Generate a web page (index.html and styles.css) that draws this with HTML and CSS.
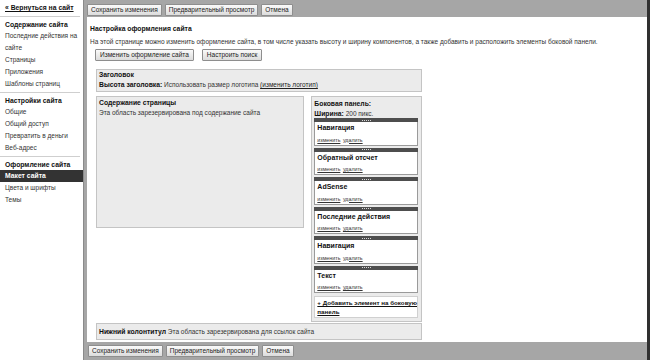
FILE: index.html
```html
<!DOCTYPE html>
<html lang="ru">
<head>
  <meta charset="UTF-8">
  <title>Макет сайта</title>
  <link rel="stylesheet" href="styles.css">
</head>
<body>
  <aside class="sidebar">
    <div class="back"><a href="#">« Вернуться на сайт</a></div>
    <div class="group">
      <div class="group-title">Содержание сайта</div>
      <a href="#">Последние действия на сайте</a>
      <a href="#">Страницы</a>
      <a href="#">Приложения</a>
      <a href="#">Шаблоны страниц</a>
    </div>
    <div class="group">
      <div class="group-title">Настройки сайта</div>
      <a href="#">Общие</a>
      <a href="#">Общий доступ</a>
      <a href="#">Превратить в деньги</a>
      <a href="#">Веб-адрес</a>
    </div>
    <div class="group last">
      <div class="group-title">Оформление сайта</div>
      <a href="#" class="active">Макет сайта</a>
      <a href="#">Цвета и шрифты</a>
      <a href="#">Темы</a>
    </div>
  </aside>

  <main class="main">
    <div class="toolbar">
      <button type="button">Сохранить изменения</button>
      <button type="button">Предварительный просмотр</button>
      <button type="button">Отмена</button>
    </div>

    <div class="content">
      <h1>Настройка оформления сайта</h1>
      <p class="intro">На этой странице можно изменить оформление сайта, в том числе указать высоту и ширину компонентов, а также добавить и расположить элементы боковой панели.</p>
      <div class="actions">
        <button type="button">Изменить оформление сайта</button>
        <button type="button">Настроить поиск</button>
      </div>

      <div class="layout">
        <div class="box header-box">
          <div><b>Заголовок</b></div>
          <div><b>Высота заголовка:</b> Использовать размер логотипа <a href="#">(изменить логотип)</a></div>
        </div>

        <div class="row">
          <div class="box page-box">
            <div><b>Содержание страницы</b></div>
            <div>Эта область зарезервирована под содержание сайта</div>
          </div>

          <div class="box side-box">
            <div class="side-title">Боковая панель:</div>
            <div class="side-width"><b>Ширина:</b> 200 пикс.</div>

            <div class="widget">
              <div class="grip"><span></span></div>
              <div class="widget-body">
                <div class="widget-title">Навигация</div>
                <div class="widget-links"><a href="#">изменить</a> <a href="#">удалить</a></div>
              </div>
            </div>
            <div class="widget">
              <div class="grip"><span></span></div>
              <div class="widget-body">
                <div class="widget-title">Обратный отсчет</div>
                <div class="widget-links"><a href="#">изменить</a> <a href="#">удалить</a></div>
              </div>
            </div>
            <div class="widget">
              <div class="grip"><span></span></div>
              <div class="widget-body">
                <div class="widget-title">AdSense</div>
                <div class="widget-links"><a href="#">изменить</a> <a href="#">удалить</a></div>
              </div>
            </div>
            <div class="widget">
              <div class="grip"><span></span></div>
              <div class="widget-body">
                <div class="widget-title">Последние действия</div>
                <div class="widget-links"><a href="#">изменить</a> <a href="#">удалить</a></div>
              </div>
            </div>
            <div class="widget">
              <div class="grip"><span></span></div>
              <div class="widget-body">
                <div class="widget-title">Навигация</div>
                <div class="widget-links"><a href="#">изменить</a> <a href="#">удалить</a></div>
              </div>
            </div>
            <div class="widget">
              <div class="grip"><span></span></div>
              <div class="widget-body">
                <div class="widget-title">Текст</div>
                <div class="widget-links"><a href="#">изменить</a> <a href="#">удалить</a></div>
              </div>
            </div>

            <div class="add-widget"><a href="#">+ Добавить элемент на боковую панель</a></div>
          </div>
        </div>

        <div class="box footer-box"><b>Нижний колонтитул</b> Эта область зарезервирована для ссылок сайта</div>
      </div>
    </div>

    <div class="toolbar bottom">
      <button type="button">Сохранить изменения</button>
      <button type="button">Предварительный просмотр</button>
      <button type="button">Отмена</button>
    </div>
  </main>
</body>
</html>
```

FILE: styles.css
```css
*{
  box-sizing: border-box;
}
body{
  margin: 0;
  width: 650px;
  height: 360px;
  overflow: hidden;
  display: flex;
  font-family: "Liberation Sans", Arial, sans-serif;
  font-size: 6.5px;
  color: #333;
  background: #fff;
}
a{
  color: #222;
}
b{
  font-size: 6.8px;
  color: #111;
}

/* left menu */
.sidebar{
  width: 84px;
  flex: none;
  border-right: 1px solid #8a8a8a;
}
.back{
  height: 17px;
  line-height: 16px;
  padding-left: 5px;
  margin-right: 3px;
  border-bottom: 1px solid #cfcfcf;
}
.back a{
  font-weight: bold;
  font-size: 6.8px;
  color: #111;
}
.group{
  display: flex;
  flex-direction: column;
  padding: 3px 0 2px;
  margin-right: 3px;
  border-bottom: 1px solid #cfcfcf;
}
.group.last{
  border-bottom: none;
}
.group-title{
  font-weight: bold;
  font-size: 6.8px;
  line-height: 10px;
  padding-left: 5px;
  color: #111;
}
.group a{
  line-height: 12px;
  padding-left: 5px;
  text-decoration: none;
  color: #333;
}
.group a.active{
  background: #333;
  color: #fff;
  font-weight: bold;
  font-size: 6.8px;
  margin-right: -3px;
}

/* main frame */
.main{
  flex: 1;
  display: flex;
  flex-direction: column;
  background: #a6a6a6;
  padding-left: 3px;
  border-right: 3px solid #303030;
}
.toolbar{
  height: 17px;
  flex: none;
  display: flex;
  gap: 3px;
  padding-top: 4px;
}
.toolbar.bottom{
  height: 18px;
  padding-top: 3px;
  padding-left: 1px;
}
button{
  height: 12px;
  padding: 0 3px;
  font-family: "Liberation Sans", Arial, sans-serif;
  font-size: 6.5px;
  line-height: 10px;
  color: #222;
  background: linear-gradient(#fafafa, #dcdcdc);
  border: 1px solid #8e8e8e;
  border-radius: 1px;
}
.content{
  height: 325px;
  flex: none;
  background: #fff;
  padding: 7px 3px 0;
}
h1{
  margin: 0;
  font-size: 6.8px;
  line-height: 10px;
  color: #111;
}
.intro{
  margin: 3px 0 0;
  line-height: 10px;
}
.actions{
  display: flex;
  gap: 8px;
  margin: 2px 0 0 5px;
}
.actions button{
  padding: 0 4px;
}

/* layout editor */
.layout{
  width: 326px;
  margin: 8px 0 0 6px;
}
.box{
  background: #ebebeb;
  border: 1px solid #c4c4c4;
  line-height: 10px;
}
.header-box{
  padding: 0 2px;
  height: 23px;
}
.row{
  display: flex;
  align-items: flex-start;
  gap: 7px;
  margin-top: 4px;
}
.page-box{
  width: 209px;
  height: 132px;
  padding: 1px 2px;
}
.side-box{
  width: 111px;
  padding: 2px 3px 3px 2px;
}
.side-title{
  font-weight: bold;
  font-size: 6.8px;
  color: #111;
}
.side-width{
  line-height: 9px;
}
.widget{
  margin-top: 2px;
  background: #fff;
  border: 1px solid #9a9a9a;
  border-top: none;
}
.side-width + .widget{
  margin-top: 0;
}
.grip{
  height: 4px;
  background: #4e4e4e;
  display: flex;
  justify-content: center;
  align-items: center;
  margin: 0 -1px;
}
.grip span{
  width: 9px;
  border-top: 1px dotted #d8d8d8;
}
.widget-body{
  padding: 1px 2px 0;
}
.widget-title{
  font-size: 7px;
  font-weight: bold;
  line-height: 10px;
  color: #111;
  margin-bottom: 2.5px;
}
.widget-links{
  font-size: 5.3px;
  line-height: 9px;
}
.widget-links a{
  color: #333;
  margin-right: 1px;
}
.add-widget{
  margin-top: 3px;
  background: #fff;
  border: 1px solid #d0d0d0;
  padding: 1px 0 1px 2px;
  line-height: 9px;
}
.add-widget a{
  font-weight: bold;
  font-size: 6.2px;
  color: #111;
}
.footer-box{
  margin-top: 1px;
  height: 17px;
  line-height: 15px;
  padding: 0 2px;
}
```
